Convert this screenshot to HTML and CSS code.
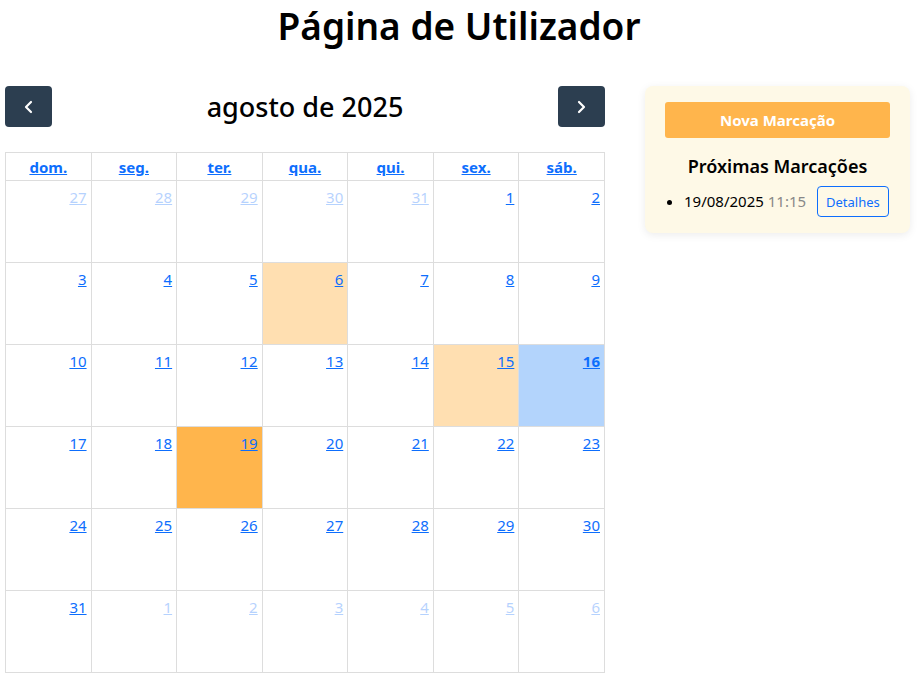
FILE: index.html
```html
<!DOCTYPE html>
<html lang="pt">
<head>
<meta charset="utf-8">
<title>Página de Utilizador</title>
<link rel="stylesheet" href="styles.css">
</head>
<body>
<h1 class="page-title">Página de Utilizador</h1>
<div class="layout">
  <section class="calendar">
    <div class="toolbar">
      <button class="nav-btn" aria-label="anterior">
        <svg width="14" height="14" viewBox="0 0 14 14"><path d="M9 2 L4 7 L9 12" fill="none" stroke="#fff" stroke-width="2.2" stroke-linecap="round" stroke-linejoin="round"/></svg>
      </button>
      <h2 class="month-title">agosto de 2025</h2>
      <button class="nav-btn" aria-label="seguinte">
        <svg width="14" height="14" viewBox="0 0 14 14"><path d="M5 2 L10 7 L5 12" fill="none" stroke="#fff" stroke-width="2.2" stroke-linecap="round" stroke-linejoin="round"/></svg>
      </button>
    </div>
    <table class="grid">
      <thead>
        <tr>
          <th><a href="#">dom.</a></th><th><a href="#">seg.</a></th><th><a href="#">ter.</a></th><th><a href="#">qua.</a></th><th><a href="#">qui.</a></th><th><a href="#">sex.</a></th><th><a href="#">sáb.</a></th>
        </tr>
      </thead>
      <tbody>
        <tr>
          <td class="other"><a href="#">27</a></td><td class="other"><a href="#">28</a></td><td class="other"><a href="#">29</a></td><td class="other"><a href="#">30</a></td><td class="other"><a href="#">31</a></td><td><a href="#">1</a></td><td><a href="#">2</a></td>
        </tr>
        <tr>
          <td><a href="#">3</a></td><td><a href="#">4</a></td><td><a href="#">5</a></td><td class="booked"><a href="#">6</a></td><td><a href="#">7</a></td><td><a href="#">8</a></td><td><a href="#">9</a></td>
        </tr>
        <tr>
          <td><a href="#">10</a></td><td><a href="#">11</a></td><td><a href="#">12</a></td><td><a href="#">13</a></td><td><a href="#">14</a></td><td class="booked"><a href="#">15</a></td><td class="today"><a href="#">16</a></td>
        </tr>
        <tr>
          <td><a href="#">17</a></td><td><a href="#">18</a></td><td class="upcoming"><a href="#">19</a></td><td><a href="#">20</a></td><td><a href="#">21</a></td><td><a href="#">22</a></td><td><a href="#">23</a></td>
        </tr>
        <tr>
          <td><a href="#">24</a></td><td><a href="#">25</a></td><td><a href="#">26</a></td><td><a href="#">27</a></td><td><a href="#">28</a></td><td><a href="#">29</a></td><td><a href="#">30</a></td>
        </tr>
        <tr>
          <td><a href="#">31</a></td><td class="other"><a href="#">1</a></td><td class="other"><a href="#">2</a></td><td class="other"><a href="#">3</a></td><td class="other"><a href="#">4</a></td><td class="other"><a href="#">5</a></td><td class="other"><a href="#">6</a></td>
        </tr>
      </tbody>
    </table>
  </section>
  <aside class="sidebar">
    <button class="new-btn">Nova Marcação</button>
    <h3 class="side-title">Próximas Marcações</h3>
    <ul class="appts">
      <li class="appt">
        <span class="appt-date">19/08/2025</span>
        <span class="appt-time">11:15</span>
        <button class="details-btn">Detalhes</button>
      </li>
    </ul>
  </aside>
</div>
</body>
</html>
```
FILE: styles.css
```css
* { box-sizing: border-box; }
html, body {
  margin: 0;
  padding: 0;
  background: #fff;
  font-family: "Noto Sans", "Open Sans", sans-serif;
  color: #000;
}
.page-title {
  margin: 0;
  padding-top: 4px;
  height: 80px;
  text-align: center;
  font-size: 37px;
  font-weight: 600;
  line-height: 44px;
}
.layout {
  display: flex;
  align-items: flex-start;
  gap: 40px;
  padding: 6px 8px 0 5px;
}
.calendar {
  width: 600px;
  flex: none;
}
.toolbar {
  display: flex;
  justify-content: space-between;
  align-items: center;
  height: 41px;
  margin-bottom: 25px;
}
.nav-btn {
  width: 47px;
  height: 41px;
  border: none;
  border-radius: 4px;
  background: #2c3e50;
  display: flex;
  align-items: center;
  justify-content: center;
  padding: 0;
}
.month-title {
  margin: 0;
  font-size: 27px;
  font-weight: 500;
}
.grid {
  width: 600px;
  border-collapse: collapse;
  table-layout: fixed;
}
.grid th, .grid td {
  border: 1px solid #ddd;
}
.grid th {
  height: 28px;
  padding: 0;
  font-size: 15px;
  font-weight: 700;
  text-align: center;
}
.grid th a { color: #0d6efd; }
.grid td {
  height: 82px;
  vertical-align: top;
  text-align: right;
  padding: 6px 4px 0 0;
  font-size: 15px;
}
.grid td a { color: #0d6efd; }
.grid td.other a { opacity: 0.3; }
.grid td.booked { background: #ffdfb1; }
.grid td.upcoming { background: #ffb54c; }
.grid td.today { background: #b3d4fc; }
.grid td.today a { font-weight: 700; }
.sidebar {
  width: 265px;
  flex: none;
  background: #fef9e7;
  border-radius: 8px;
  box-shadow: 0 2px 8px rgba(0,0,0,0.08);
  padding: 16px 20px 16px 20px;
}
.new-btn {
  display: block;
  width: 100%;
  height: 36px;
  border: none;
  border-radius: 3px;
  background: #ffb54c;
  color: #fff;
  font-family: inherit;
  font-size: 15px;
  font-weight: 700;
}
.side-title {
  margin: 16px 0 8px;
  text-align: center;
  font-size: 18px;
  font-weight: 600;
}
.appts {
  margin: 0;
  padding-left: 19px;
}
.appt {
  font-size: 15px;
  white-space: nowrap;
}
.appt-time { color: #888; }
.details-btn {
  margin-left: 7px;
  height: 31px;
  padding: 0 8px;
  background: transparent;
  border: 1px solid #0d6efd;
  border-radius: 4px;
  color: #0d6efd;
  font-family: inherit;
  font-size: 13px;
}
```
